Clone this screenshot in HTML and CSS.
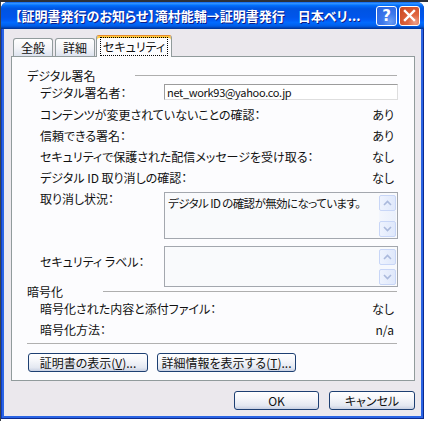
FILE: index.html
```html
<!DOCTYPE html>
<html lang="ja">
<head>
    <meta charset="UTF-8">
    <title>プロパティ</title>
    <link rel="stylesheet" href="styles.css">
</head>
<body>
<div class="window">
    <div class="titlebar">
        <div class="title">【証明書発行のお知らせ】滝村能輔→証明書発行　日本ベリ...</div>
        <div class="tbtn help">?</div>
        <div class="tbtn close">
            <svg width="13" height="13" viewBox="0 0 13 13"><path d="M2 2 L11 11 M11 2 L2 11" stroke="#fff" stroke-width="2.4" stroke-linecap="square"/></svg>
        </div>
    </div>
    <div class="client">
        <div class="tabs">
            <div class="tab">全般</div>
            <div class="tab">詳細</div>
            <div class="tab active"><span class="focus">セキュリティ</span></div>
        </div>
        <div class="panel">
            <div class="group">
                <span>デジタル署名</span>
                <div class="rule"></div>
            </div>
            <div class="row signer">
                <div class="label">デジタル署名者：</div>
                <div class="textbox">net_work93@yahoo.co.jp</div>
            </div>
            <div class="row"><div class="label">コンテンツが変更されていないことの確認：</div><div class="value">あり</div></div>
            <div class="row"><div class="label">信頼できる署名：</div><div class="value">あり</div></div>
            <div class="row"><div class="label">セキュリティで保護された配信メッセージを受け取る：</div><div class="value">なし</div></div>
            <div class="row"><div class="label">デジタル ID 取り消しの確認：</div><div class="value">なし</div></div>
            <div class="row box-row revoke">
                <div class="label">取り消し状況：</div>
                <div class="textarea">
                    <div class="ta-text">デジタル ID の確認が無効になっています。</div>
                    <div class="scroll">
                        <div class="sbtn"><svg width="9" height="6" viewBox="0 0 9 6"><path d="M1 5 L4.5 1.5 L8 5" fill="none" stroke="#aab9dc" stroke-width="1.6"/></svg></div>
                        <div class="track"></div>
                        <div class="sbtn"><svg width="9" height="6" viewBox="0 0 9 6"><path d="M1 1 L4.5 4.5 L8 1" fill="none" stroke="#aab9dc" stroke-width="1.6"/></svg></div>
                    </div>
                </div>
            </div>
            <div class="row box-row seclabel">
                <div class="label">セキュリティ ラベル：</div>
                <div class="textarea short">
                    <div class="ta-text"></div>
                    <div class="scroll">
                        <div class="sbtn"><svg width="9" height="6" viewBox="0 0 9 6"><path d="M1 5 L4.5 1.5 L8 5" fill="none" stroke="#aab9dc" stroke-width="1.6"/></svg></div>
                        <div class="track"></div>
                        <div class="sbtn"><svg width="9" height="6" viewBox="0 0 9 6"><path d="M1 1 L4.5 4.5 L8 1" fill="none" stroke="#aab9dc" stroke-width="1.6"/></svg></div>
                    </div>
                </div>
            </div>
            <div class="group group2">
                <span>暗号化</span>
                <div class="rule"></div>
            </div>
            <div class="row"><div class="label">暗号化された内容と添付ファイル：</div><div class="value">なし</div></div>
            <div class="row"><div class="label">暗号化方法：</div><div class="value">n/a</div></div>
            <div class="separator"></div>
            <div class="actions">
                <button class="btn cert">証明書の表示(<u>V</u>)...</button>
                <button class="btn detail">詳細情報を表示する(<u>T</u>)...</button>
            </div>
        </div>
        <div class="footer">
            <button class="btn ok">OK</button>
            <button class="btn cancel">キャンセル</button>
        </div>
    </div>
</div>
</body>
</html>
```

FILE: styles.css
```css
*{
    margin:0;
    padding:0;
    box-sizing:border-box;
}
body{
    width:428px;
    height:421px;
    overflow:hidden;
    background:
        linear-gradient(#2c313b 0 2px, transparent 2px),
        linear-gradient(to right, #3b404a 0 1px, #fff 1px);
    font-family:"Noto Sans CJK JP", sans-serif;
    font-size:12px;
    font-feature-settings:"palt";
    color:#111;
}
.window{
    margin:2px 0 0 1px;
    width:423px;
    height:417px;
    border-radius:7px 7px 0 0;
    background:#2a64e4;
    box-shadow:inset -1px -1px #0b2a8e, inset 1px 0 #0c3fcc;
    padding:0 3px 3px;
    display:flex;
    flex-direction:column;
}
.titlebar{
    height:27px;
    margin:0 -3px;
    padding:0 4px 0 14px;
    border-radius:7px 7px 0 0;
    background:linear-gradient(#0058ee 0%, #3593ff 4%, #288eff 7%, #127dff 10%, #036ffc 13%, #0262ee 18%, #0057e5 24%, #0054e3 30%, #0055eb 56%, #005bf5 66%, #026afe 76%, #0062ef 86%, #0052d6 92%, #0040ab 96%, #003092 100%);
    display:flex;
    align-items:center;
}
.title{
    flex:1;
    color:#fff;
    font-weight:bold;
    font-size:13px;
    white-space:nowrap;
    overflow:hidden;
    text-shadow:1px 1px #0f1e89;
}
.tbtn{
    width:21px;
    height:20px;
    border:1px solid #fff;
    border-radius:3px;
    display:flex;
    align-items:center;
    justify-content:center;
    margin-left:2px;
}
.help{
    background:radial-gradient(circle at 70% 80%, #6d9ff5 0%, #3c78ec 40%, #2a63df 100%);
    color:#fff;
    font-family:"DejaVu Sans", sans-serif;
    font-weight:bold;
    font-size:15px;
}
.close{
    background:radial-gradient(circle at 80% 85%, #f0a088 0%, #e0653f 35%, #c9461f 100%);
}
.client{
    flex:1;
    background:#ebe8ed;
    padding:6px 6px 0 7px;
    display:flex;
    flex-direction:column;
}
.tabs{
    height:21px;
    padding-left:2px;
    display:flex;
    align-items:flex-end;
}
.tab{
    width:40px;
    height:18px;
    margin-right:2px;
    border:1px solid #919b9c;
    border-bottom:none;
    border-radius:3px 3px 0 0;
    background:linear-gradient(#fff, #f3f4f8 55%, #dde3ef);
    text-align:center;
    line-height:17px;
}
.tab.active{
    width:76px;
    height:22px;
    margin:0 0 -1px -1px;
    position:relative;
    z-index:1;
    background:#fcfcfe;
    border-top:1px solid #e68b2c;
    box-shadow:inset 0 2px #ffc83c;
    line-height:18px;
    padding-top:2px;
}
.focus{
    outline:1px dotted #000;
    padding:0 2px;
}
.panel{
    height:325px;
    border:1px solid #919b9c;
    background:#fcfcfe;
    padding:10px 17px 7px 15px;
    display:flex;
    flex-direction:column;
}
.group{
    height:16px;
    display:flex;
    align-items:center;
}
.group .rule{
    flex:1;
    height:1px;
    margin-left:40px;
    background:#aeaeae;
}
.group2{
    height:12px;
    margin:-2px 0 1px;
}
.row{
    height:21px;
    padding:0 3px 0 13px;
    display:flex;
    align-items:center;
}
.label{
    width:124px;
    flex:none;
    white-space:nowrap;
}
.row .label{
    width:auto;
    flex:1;
}
.row.signer .label,
.row.box-row .label{
    flex:none;
    width:124px;
}
.value{
    white-space:nowrap;
}
.signer{
    align-items:flex-start;
    padding-right:0;
    margin-right:-1px;
}
.signer .label{
    line-height:19px;
}
.textbox{
    margin-top:1px;
    width:234px;
    height:16px;
    border:1px solid;
    border-color:#9c9c9c #dedede #dedede #9c9c9c;
    background:#fff;
    padding-left:2px;
    line-height:14px;
    font-size:11px;
    letter-spacing:-0.3px;
}
.box-row{
    align-items:flex-start;
    padding-right:0;
    margin-right:-1px;
}
.revoke{
    height:47px;
    margin-top:4px;
}
.revoke .label{
    line-height:13px;
}
.seclabel{
    height:41px;
    margin-top:7px;
}
.seclabel .label{
    padding-top:9px;
    line-height:13px;
}
.textarea{
    width:234px;
    height:47px;
    border:1px solid #a3a7ae;
    background:#f9fafc;
    display:flex;
}
.textarea.short{
    height:41px;
}
.ta-text{
    flex:1;
    padding:3px 0 0 3px;
    line-height:14px;
    white-space:nowrap;
    overflow:hidden;
    font-size:11.5px;
    letter-spacing:-0.6px;
}
.scroll{
    width:18px;
    padding:2px 1px 1px 0;
    display:flex;
    flex-direction:column;
}
.sbtn{
    height:16px;
    border:1px solid #c8d6f7;
    border-radius:2px;
    background:linear-gradient(to right, #eef3fe, #dfe8fb);
    display:flex;
    align-items:center;
    justify-content:center;
}
.track{
    flex:1;
    background:linear-gradient(to right, #f3f6fd, #eaf0fc);
}
.short .track{
    background:#f6f8fd;
}
.separator{
    height:1px;
    margin-top:3px;
    background:#b0b0b0;
}
.actions{
    margin-top:9px;
    padding-left:1px;
    display:flex;
    gap:9px;
}
.btn{
    height:19px;
    border:1px solid #1d3f72;
    border-radius:3px;
    background:linear-gradient(#fff 0%, #f5f6fa 40%, #e4e8f1 80%, #c8d0e2 100%);
    font-family:inherit;
    font-size:12px;
    font-feature-settings:"palt";
    color:#111;
    line-height:16px;
}
.cert{
    width:120px;
}
.detail{
    width:139px;
}
.footer{
    margin-top:10px;
    display:flex;
    justify-content:flex-end;
    gap:10px;
}
.ok{
    width:85px;
}
.cancel{
    width:86px;
}
```
